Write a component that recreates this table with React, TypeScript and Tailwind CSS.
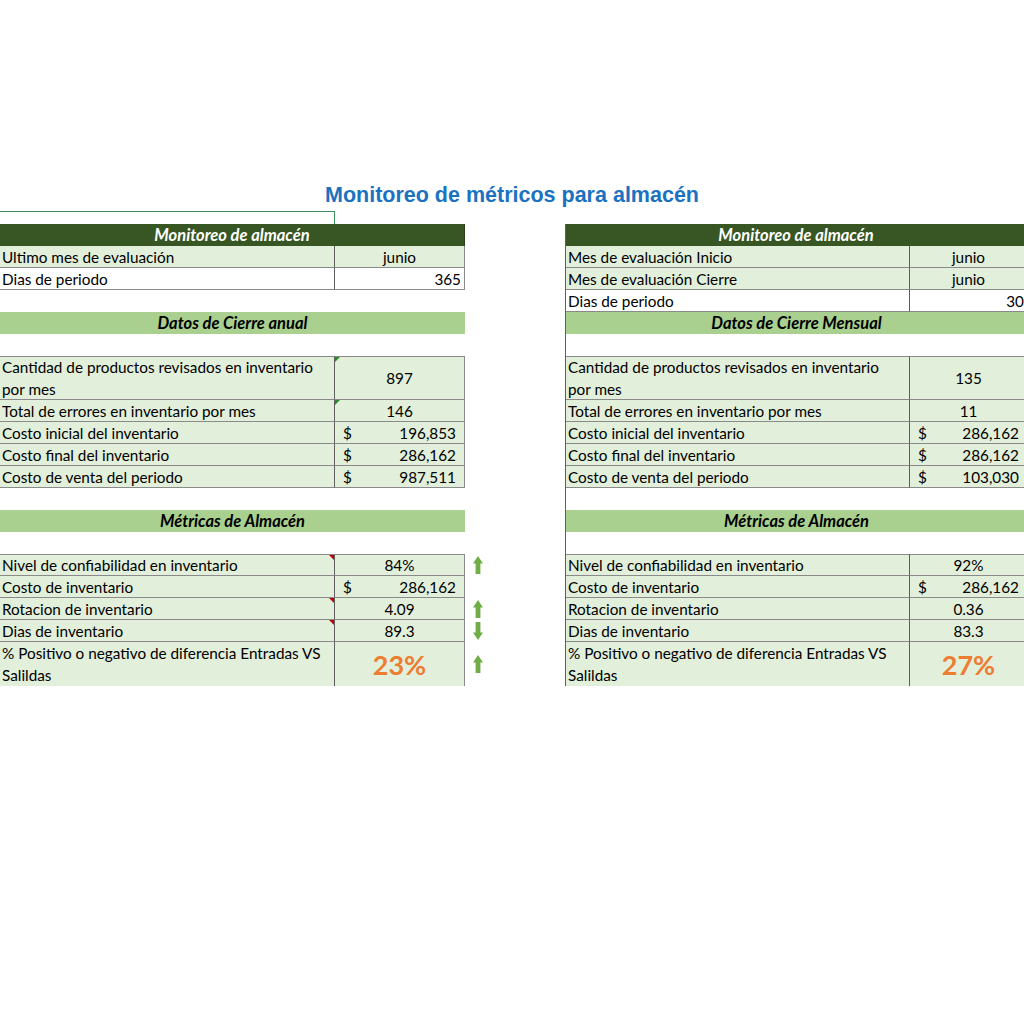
import React from "react";

type Side = "left" | "right";
type Mode = "center" | "right" | "money" | "big";

const labelW: Record<Side, string> = { left: "w-[334px]", right: "w-[343px]" };
const valueW: Record<Side, string> = { left: "w-[131px]", right: "w-[118px]" };

function Arrow({ down }: { down?: boolean }) {
  return (
    <svg width="10" height="18" viewBox="0 0 10 18" className={down ? "rotate-180" : ""}>
      <path d="M5 0 L10 7.5 L7.4 7.5 L7.4 18 L2.6 18 L2.6 7.5 L0 7.5 Z" fill="#70ad47" />
    </svg>
  );
}

function HeadRow({ text, side, dark }: { text: string; side: Side; dark?: boolean }) {
  const width = side === "left" ? "w-[465px]" : "w-[461px]";
  return (
    <div className="flex h-[22px]">
      <div
        className={`${width} flex items-center justify-center font-bold italic text-[16.5px] leading-[22px] ${
          dark ? "bg-[#375623] text-white border-r border-[#2a3f1b]" : "bg-[#a9d08e] text-black"
        }`}
      >
        {text}
      </div>
    </div>
  );
}

function Blank() {
  return <div className="h-[22px]" />;
}

function DataRow({
  label,
  value,
  side,
  mode = "center",
  white,
  tall,
  top,
  markL,
  markV,
  arrow,
}: {
  label: React.ReactNode;
  value: string;
  side: Side;
  mode?: Mode;
  white?: boolean;
  tall?: boolean;
  top?: boolean;
  markL?: boolean;
  markV?: boolean;
  arrow?: "up" | "down";
}) {
  const bg = white ? "bg-white" : "bg-[#e2efda]";
  const h = tall ? "h-[44px]" : "h-[22px]";
  const bt = top ? "border-t" : "";
  return (
    <div className={`flex ${h}`}>
      <div
        className={`${labelW[side]} ${bg} ${bt} relative border-b border-[#8a8a8a] pl-[2px] flex items-center leading-[22px] whitespace-nowrap`}
      >
        <span>{label}</span>
        {markL && (
          <div className="absolute top-0 right-0 w-0 h-0 border-l-[5px] border-l-transparent border-t-[5px] border-t-[#c00000]" />
        )}
      </div>
      <div
        className={`${valueW[side]} ${bg} ${bt} relative border-b border-l border-[#8a8a8a] border-l-[#5e5e5e] ${
          side === "left" ? "border-r border-r-[#8a8a8a]" : ""
        } flex items-center leading-[22px]`}
      >
        {markV && (
          <div className="absolute top-0 left-0 w-0 h-0 border-r-[5px] border-r-transparent border-t-[5px] border-t-[#2e8b2e]" />
        )}
        {mode === "center" && <span className="w-full text-center">{value}</span>}
        {mode === "right" && <span className="w-full text-right pr-[3px]">{value}</span>}
        {mode === "money" && (
          <div className="w-full flex justify-between pl-[8px] pr-[8px]">
            <span>$</span>
            <span>{value}</span>
          </div>
        )}
        {mode === "big" && (
          <span className="w-full text-center text-[28px] font-bold text-[#ed7d31] leading-none">{value}</span>
        )}
      </div>
      {side === "left" && (
        <div className="w-[35px] flex items-center pl-[8px]">
          {arrow && <Arrow down={arrow === "down"} />}
        </div>
      )}
    </div>
  );
}

function LeftTable() {
  const s: Side = "left";
  return (
    <div className="w-[565px] flex flex-col">
      {/* selected cell outline */}
      <div className="h-[13px] w-[335px] border-t border-r border-t-[#3f8f5a] border-r-[#3f8f5a]" />
      <HeadRow text="Monitoreo de almacén" side={s} dark />
      <DataRow side={s} label="Ultimo mes de evaluación" value="junio" />
      <DataRow side={s} label="Dias de periodo" value="365" mode="right" white />
      <Blank />
      <HeadRow text="Datos de Cierre anual" side={s} />
      <Blank />
      <DataRow
        side={s}
        top
        tall
        markV
        label={
          <>
            Cantidad de productos revisados en inventario
            <br />
            por mes
          </>
        }
        value="897"
      />
      <DataRow side={s} markV label="Total de errores en inventario por mes" value="146" />
      <DataRow side={s} label="Costo inicial del inventario" value="196,853" mode="money" />
      <DataRow side={s} label="Costo final del inventario" value="286,162" mode="money" />
      <DataRow side={s} label="Costo de venta del periodo" value="987,511" mode="money" />
      <Blank />
      <HeadRow text="Métricas de Almacén" side={s} />
      <Blank />
      <DataRow side={s} top markL arrow="up" label="Nivel de confiabilidad en inventario" value="84%" />
      <DataRow side={s} label="Costo de inventario" value="286,162" mode="money" />
      <DataRow side={s} markL arrow="up" label="Rotacion de inventario" value="4.09" />
      <DataRow side={s} markL arrow="down" label="Dias de inventario" value="89.3" />
      <div className="flex h-[44px]">
        <div className="w-[334px] bg-[#e2efda] pl-[2px] flex items-center leading-[22px] whitespace-nowrap">
          <span>
            % Positivo o negativo de diferencia Entradas VS
            <br />
            Salildas
          </span>
        </div>
        <div className="w-[131px] bg-[#e2efda] border-l border-r border-l-[#5e5e5e] border-r-[#8a8a8a] flex items-center justify-center">
          <span className="text-[27px] font-bold text-[#ed7d31] leading-none">23%</span>
        </div>
        <div className="w-[35px] flex items-center pl-[8px]">
          <Arrow />
        </div>
      </div>
    </div>
  );
}

function RightTable() {
  const s: Side = "right";
  return (
    <div className="flex-1 overflow-hidden flex flex-col">
      <div className="h-[13px]" />
      <div className="flex flex-col border-l border-[#5e5e5e] w-[462px]">
        <HeadRow text="Monitoreo de almacén" side={s} dark />
        <DataRow side={s} label="Mes de evaluación Inicio" value="junio" />
        <DataRow side={s} label="Mes de evaluación Cierre" value="junio" />
        <DataRow side={s} label="Dias de periodo" value="30" mode="right" white />
        <HeadRow text="Datos de Cierre Mensual" side={s} />
        <Blank />
        <DataRow
          side={s}
          top
          tall
          label={
            <>
              Cantidad de productos revisados en inventario
              <br />
              por mes
            </>
          }
          value="135"
        />
        <DataRow side={s} label="Total de errores en inventario por mes" value="11" />
        <DataRow side={s} label="Costo inicial del inventario" value="286,162" mode="money" />
        <DataRow side={s} label="Costo final del inventario" value="286,162" mode="money" />
        <DataRow side={s} label="Costo de venta del periodo" value="103,030" mode="money" />
        <Blank />
        <HeadRow text="Métricas de Almacén" side={s} />
        <Blank />
        <DataRow side={s} top label="Nivel de confiabilidad en inventario" value="92%" />
        <DataRow side={s} label="Costo de inventario" value="286,162" mode="money" />
        <DataRow side={s} label="Rotacion de inventario" value="0.36" />
        <DataRow side={s} label="Dias de inventario" value="83.3" />
        <div className="flex h-[44px]">
          <div className="w-[343px] bg-[#e2efda] pl-[2px] flex items-center leading-[22px] whitespace-nowrap">
            <span>
              % Positivo o negativo de diferencia Entradas VS
              <br />
              Salildas
            </span>
          </div>
          <div className="w-[118px] bg-[#e2efda] border-l border-[#5e5e5e] flex items-center justify-center">
            <span className="text-[27px] font-bold text-[#ed7d31] leading-none">27%</span>
          </div>
        </div>
      </div>
    </div>
  );
}

export default function App() {
  return (
    <div className="w-[1024px] h-[1024px] bg-white overflow-hidden text-black text-[15.3px] font-['Lato','Open_Sans',sans-serif]">
      <div className="h-[181px]" />
      <h1 className="h-[28px] leading-[28px] text-center text-[21.5px] font-bold text-[#1b72c0] font-['Liberation_Sans',Arial,sans-serif]">
        Monitoreo de métricos para almacén
      </h1>
      <div className="h-[2px]" />
      <div className="flex">
        <LeftTable />
        <RightTable />
      </div>
    </div>
  );
}
